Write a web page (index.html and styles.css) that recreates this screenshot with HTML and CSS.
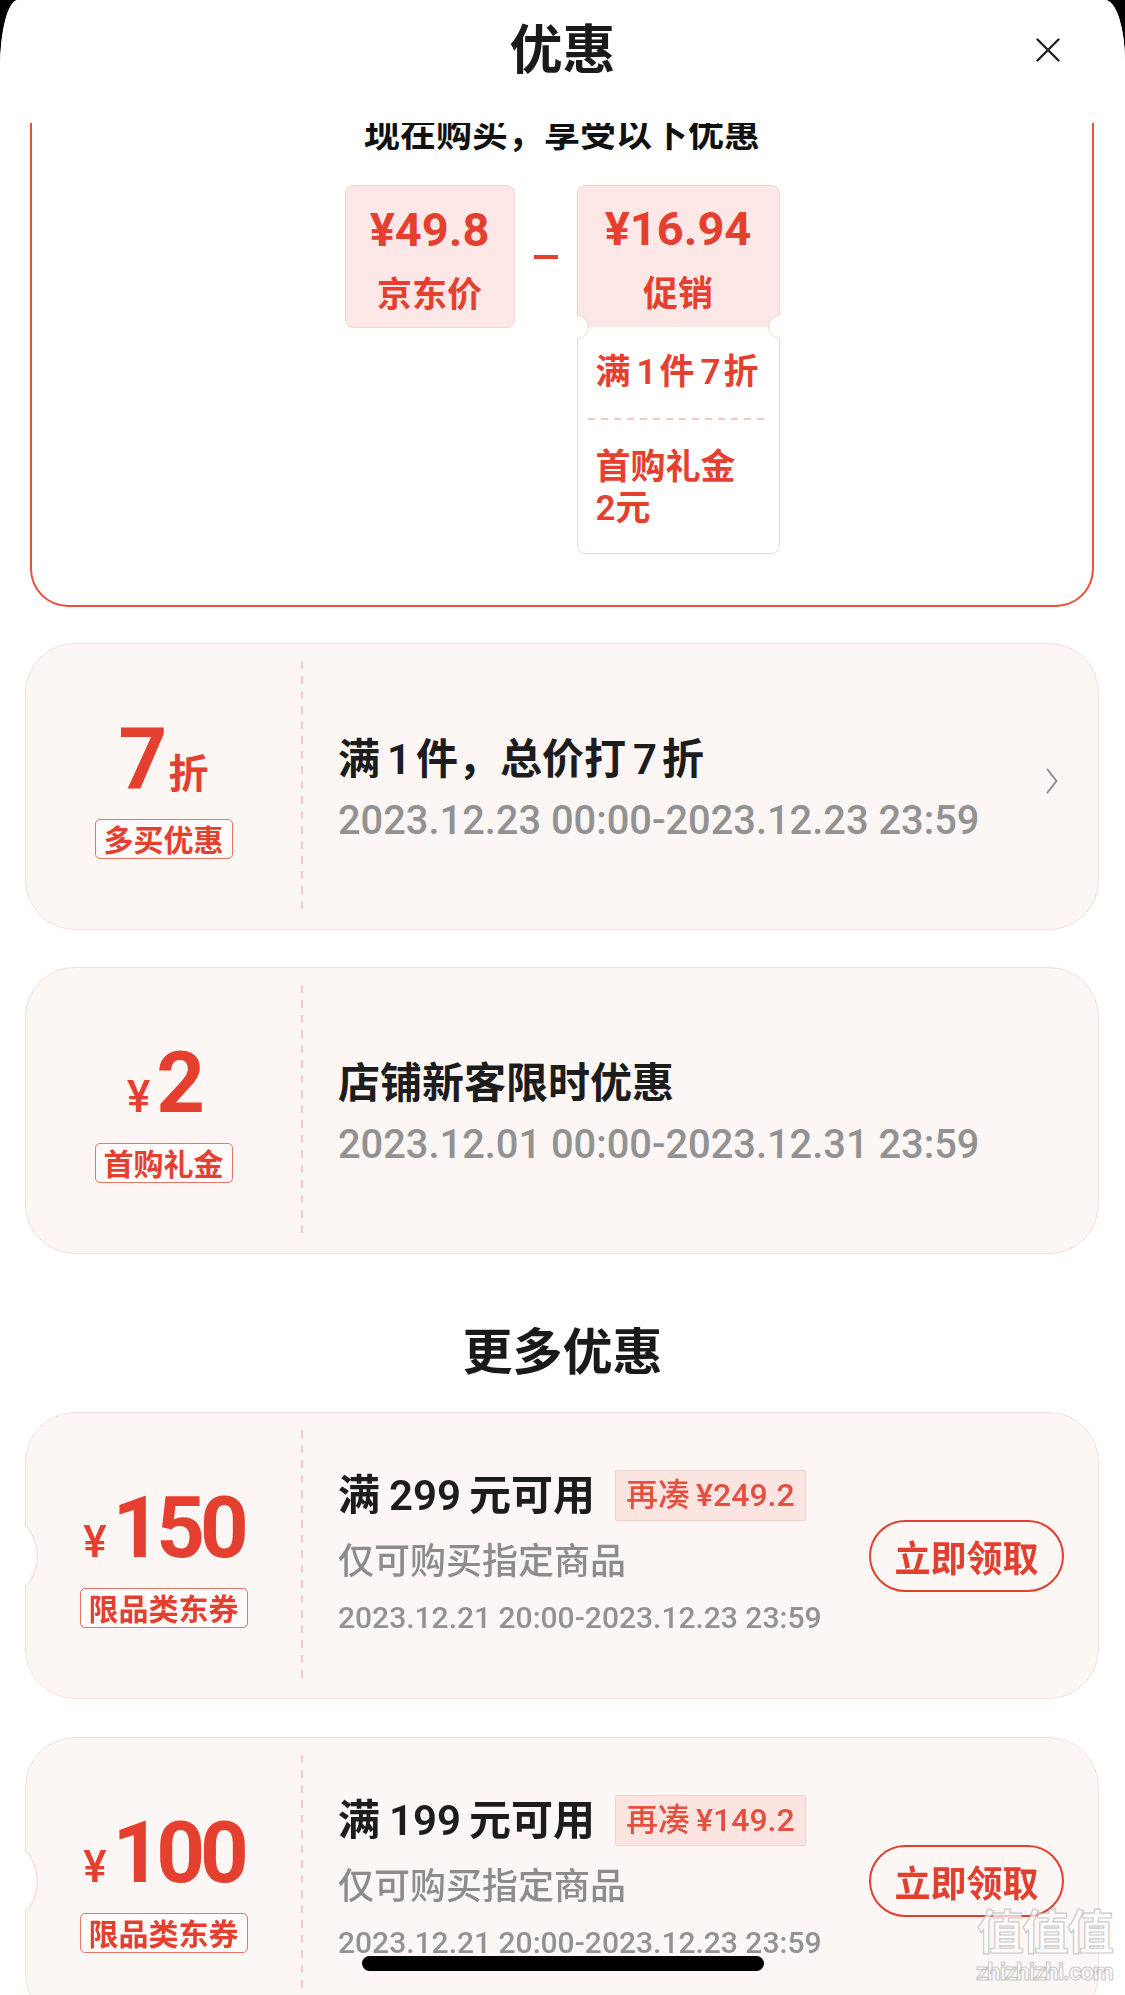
FILE: index.html
```html
<!DOCTYPE html>
<html lang="zh-CN">
<head>
<meta charset="utf-8">
<title>优惠</title>
<link rel="stylesheet" href="styles.css">
</head>
<body>
<div class="sheet">
  <header class="header">
    <h1 class="title">优惠</h1>
    <button class="close" aria-label="关闭">
      <svg width="24" height="24" viewBox="0 0 24 24"><path d="M1.5 1.5 L22.5 22.5 M22.5 1.5 L1.5 22.5" stroke="#222" stroke-width="2.4" fill="none" stroke-linecap="round"/></svg>
    </button>
  </header>

  <main class="scroll">
    <section class="summary">
      <p class="summary-title">现在购买，享受以下优惠</p>
      <div class="calc">
        <div class="price-box">
          <div class="price">¥49.8</div>
          <div class="price-label">京东价</div>
        </div>
        <div class="minus"></div>
        <div class="promo">
          <div class="promo-head">
            <div class="price">¥16.94</div>
            <div class="price-label">促销</div>
          </div>
          <div class="promo-body">
            <div class="promo-item nowrap">满<span class="pn">1</span>件<span class="pn">7</span>折</div>
            <div class="promo-sep"></div>
            <div class="promo-item two">首购礼金<span class="nowrap">2元</span></div>
          </div>
          <span class="notch notch-l"></span>
          <span class="notch notch-r"></span>
        </div>
      </div>
    </section>

    <article class="coupon">
      <div class="c-left">
        <div class="amount"><span class="big">7</span><span class="unit">折</span></div>
        <span class="tag">多买优惠</span>
      </div>
      <div class="c-sep"></div>
      <div class="c-right">
        <div class="c-info">
          <div class="c-title">满<span class="n">1</span>件，总价打<span class="n">7</span>折</div>
          <div class="c-date">2023.12.23 00:00-2023.12.23 23:59</div>
        </div>
        <svg class="chev" width="12" height="26" viewBox="0 0 12 26"><path d="M1.5 1.5 L10.5 13 L1.5 24.5" stroke="#8a8a8a" stroke-width="2" fill="none" stroke-linecap="round" stroke-linejoin="round"/></svg>
      </div>
    </article>

    <article class="coupon">
      <div class="c-left">
        <div class="amount"><span class="yen">¥</span><span class="big">2</span></div>
        <span class="tag">首购礼金</span>
      </div>
      <div class="c-sep"></div>
      <div class="c-right">
        <div class="c-info">
          <div class="c-title">店铺新客限时优惠</div>
          <div class="c-date">2023.12.01 00:00-2023.12.31 23:59</div>
        </div>
      </div>
    </article>

    <h2 class="more">更多优惠</h2>

    <article class="coupon ticket">
      <div class="c-left">
        <div class="amount"><span class="yen">¥</span><span class="big">150</span></div>
        <span class="tag">限品类东券</span>
      </div>
      <div class="c-sep"></div>
      <div class="c-right">
        <div class="c-info2">
          <div class="c-row">
            <span class="c-title2">满<span class="n2">299</span>元可用</span>
            <span class="badge">再凑<span class="bp">¥249.2</span></span>
          </div>
          <div class="c-sub">仅可购买指定商品</div>
          <div class="c-date2">2023.12.21 20:00-2023.12.23 23:59</div>
        </div>
        <button class="get">立即领取</button>
      </div>
    </article>

    <article class="coupon ticket">
      <div class="c-left">
        <div class="amount"><span class="yen">¥</span><span class="big">100</span></div>
        <span class="tag">限品类东券</span>
      </div>
      <div class="c-sep"></div>
      <div class="c-right">
        <div class="c-info2">
          <div class="c-row">
            <span class="c-title2">满<span class="n2">199</span>元可用</span>
            <span class="badge">再凑<span class="bp">¥149.2</span></span>
          </div>
          <div class="c-sub">仅可购买指定商品</div>
          <div class="c-date2">2023.12.21 20:00-2023.12.23 23:59</div>
        </div>
        <button class="get">立即领取</button>
      </div>
    </article>
  </main>

  <div class="watermark">
    <div class="wm-big">值值值</div>
    <div class="wm-small">zhizhizhi.com</div>
  </div>
  <div class="home-bar"></div>
</div>
</body>
</html>
```

FILE: styles.css
```css
* { box-sizing: border-box; margin: 0; padding: 0; }

html, body {
  width: 1125px;
  height: 1995px;
  overflow: hidden;
}

body {
  background: #000;
  font-family: Roboto, "Noto Sans CJK SC", sans-serif;
  color: #1c1c1c;
}

.sheet {
  position: relative;
  width: 1125px;
  height: 1995px;
  background: #fff;
  border-radius: 18px 20px 0 0 / 68px 62px 0 0;
  display: flex;
  flex-direction: column;
  overflow: hidden;
}

/* header */
.header {
  flex: 0 0 123px;
  display: grid;
  grid-template-columns: 1fr auto 1fr;
  align-items: start;
  padding-top: 16px;
  background: #fff;
}

.title {
  grid-column: 2;
  font-family: "Noto Sans CJK SC", sans-serif;
  font-size: 53px;
  line-height: 60px;
  font-weight: 600;
  color: #1a1a1a;
}

.close {
  grid-column: 3;
  justify-self: end;
  width: 24px;
  height: 24px;
  margin: 22px 65px 0 0;
  border: 0;
  background: none;
}

.close svg { display: block; }

/* scroll area */
.scroll {
  flex: 1 1 auto;
  min-height: 0;
  overflow: hidden;
}

/* summary */
.summary {
  margin: -14px 31px 0 30px;
  border: 2px solid #e6503c;
  border-top: 0;
  border-radius: 0 0 38px 38px;
  padding-bottom: 51px;
}

.summary-title {
  text-align: center;
  font-family: "Noto Sans CJK SC", sans-serif;
  font-size: 36px;
  line-height: 44px;
  font-weight: 700;
  color: #111;
}

.calc {
  display: flex;
  justify-content: center;
  align-items: flex-start;
  gap: 19px;
  margin-top: 32px;
}

.price-box {
  width: 170px;
  height: 143px;
  background: #fde8e7;
  border: 1px solid #f7d4d0;
  border-radius: 8px;
  text-align: center;
  padding-top: 19px;
  color: #e5402f;
}

.price {
  font-size: 47px;
  line-height: 50px;
  font-weight: 700;
}

.price-label {
  margin-top: 15px;
  font-family: "Noto Sans CJK SC", sans-serif;
  font-size: 35px;
  line-height: 44px;
  font-weight: 600;
}

.minus {
  width: 24px;
  height: 4px;
  margin-top: 70px;
  background: #e5402f;
}

.promo {
  position: relative;
  width: 203px;
  border-radius: 8px;
  overflow: hidden;
}

.promo-head {
  height: 142px;
  background: #fde8e7;
  border: 1px solid #f5d3cf;
  border-bottom: 0;
  border-radius: 8px 8px 0 0;
  text-align: center;
  padding-top: 18px;
  color: #e5402f;
}

.promo-body {
  background: #fff;
  border: 1px solid #f5d3cf;
  border-top: 0;
  border-radius: 0 0 8px 8px;
  padding: 24px 0;
  color: #e5402f;
}

.promo-item {
  padding: 0 24px 0 18px;
  font-family: Roboto, "Noto Sans CJK SC", sans-serif;
  font-size: 35px;
  line-height: 44px;
  font-weight: 600;
}

.promo-item.two { line-height: 41px; }

.nowrap { white-space: nowrap; }

.pn { margin: 0 3px 0 6px; }

.promo-sep {
  height: 2px;
  margin: 23px 10px 27px;
  background: repeating-linear-gradient(to right, #f3cbc6 0 7px, transparent 7px 13px);
}

.notch {
  position: absolute;
  top: 130px;
  width: 24px;
  height: 24px;
  border-radius: 50%;
  background: #fff;
  border: 1px solid #f5d3cf;
}

.notch-l { left: -12px; }
.notch-r { right: -12px; }

/* coupons */
.coupon {
  position: relative;
  display: grid;
  grid-template-columns: 275px 2px 1fr;
  height: 287px;
  margin: 36px 26px 0 25px;
  background: #fcf6f5;
  border: 1.5px solid #f5dfdb;
  border-radius: 50px;
}

.coupon + .coupon { margin-top: 37px; }

.ticket {
  -webkit-mask-image: radial-gradient(circle at -36px 50%, transparent 46px, #000 46.6px);
  mask-image: radial-gradient(circle at -36px 50%, transparent 46px, #000 46.6px);
}

.ticket::before {
  content: "";
  position: absolute;
  left: -85px;
  top: calc(50% - 47.5px);
  width: 95px;
  height: 95px;
  border-radius: 50%;
  border: 1.5px solid #f5dfdb;
}

.c-left {
  display: flex;
  flex-direction: column;
  align-items: center;
  justify-content: center;
  padding-top: 12px;
  color: #e5402f;
}

.amount {
  font-size: 85px;
  line-height: 64px;
  height: 64px;
  font-weight: 700;
  white-space: nowrap;
}

.big { letter-spacing: -5px; }

.unit {
  font-family: "Noto Sans CJK SC", sans-serif;
  font-size: 40px;
  line-height: 0;
  font-weight: 600;
  margin-left: 6px;
}

.yen {
  font-size: 44px;
  line-height: 0;
  font-weight: 500;
  margin-right: 6px;
}

.tag {
  display: block;
  margin-top: 28px;
  height: 40px;
  padding: 0 8px;
  border: 1.5px solid #ea7467;
  border-radius: 5px;
  background: #fffbfa;
  font-family: "Noto Sans CJK SC", sans-serif;
  font-size: 30px;
  line-height: 37px;
  font-weight: 600;
  color: #e5402f;
}

.c-sep {
  margin: 17px 0;
  width: 2px;
  background: repeating-linear-gradient(to bottom, #f2cbc6 0 8px, transparent 8px 15px);
}

.c-right {
  display: flex;
  align-items: center;
  justify-content: space-between;
  padding: 0 40px 0 35px;
  min-width: 0;
}

.c-info { padding-top: 9px; }

.c-title {
  font-size: 42px;
  line-height: 60px;
  font-weight: 600;
  color: #1c1c1c;
  white-space: nowrap;
}

.n { margin: 0 5px 0 7px; }

.c-date {
  font-size: 39.8px;
  line-height: 62px;
  font-weight: 500;
  color: #929292;
  white-space: nowrap;
}

.chev {
  flex: 0 0 auto;
  margin-bottom: 11px;
}

.more {
  text-align: center;
  font-family: "Noto Sans CJK SC", sans-serif;
  font-size: 50px;
  line-height: 60px;
  font-weight: 600;
  color: #1a1a1a;
  margin: 64px 0 34px;
}

.more + .coupon { margin-top: 0; }

.ticket + .ticket { margin-top: 38px; }

.ticket .c-right { padding-right: 34px; }

.c-info2 { min-width: 0; }

.c-row {
  display: flex;
  align-items: center;
  gap: 20px;
  height: 62px;
}

.c-title2 {
  font-size: 42px;
  line-height: 62px;
  font-weight: 600;
  color: #1c1c1c;
  white-space: nowrap;
}

.n2 { margin: 0 8px 0 9px; }

.badge {
  height: 51px;
  padding: 0 10px;
  background: #fce4e1;
  border: 1px solid #f6d0cb;
  border-radius: 2px;
  font-size: 32px;
  line-height: 49px;
  font-weight: 500;
  color: #e4503f;
  white-space: nowrap;
}

.bp { margin-left: 6px; }

.c-sub {
  font-family: "Noto Sans CJK SC", sans-serif;
  font-size: 36px;
  line-height: 62px;
  font-weight: 500;
  color: #8c8c8c;
}

.c-date2 {
  font-size: 30px;
  line-height: 58px;
  font-weight: 500;
  color: #929292;
  white-space: nowrap;
}

.get {
  flex: 0 0 195px;
  height: 72px;
  border: 2px solid #e2402f;
  border-radius: 36px;
  background: transparent;
  color: #e2402f;
  font-family: "Noto Sans CJK SC", sans-serif;
  font-size: 36px;
  line-height: 66px;
  font-weight: 600;
  text-align: center;
}

/* overlays */
.watermark {
  position: absolute;
  right: 8px;
  bottom: 8px;
  width: 145px;
  text-align: center;
  color: rgba(255, 255, 255, 0.7);
  -webkit-text-stroke: 1.2px rgba(160, 160, 160, 0.55);
  pointer-events: none;
}

.wm-big {
  font-family: "Noto Sans CJK SC", sans-serif;
  font-size: 47px;
  line-height: 56px;
  font-weight: 700;
  letter-spacing: -2px;
}

.wm-small {
  font-family: Roboto, sans-serif;
  font-size: 24px;
  line-height: 30px;
  font-weight: 700;
  letter-spacing: -1px;
}

.home-bar {
  position: absolute;
  left: 50%;
  bottom: 24px;
  width: 402px;
  height: 15px;
  margin-left: -201px;
  border-radius: 8px;
  background: #000;
}
```
